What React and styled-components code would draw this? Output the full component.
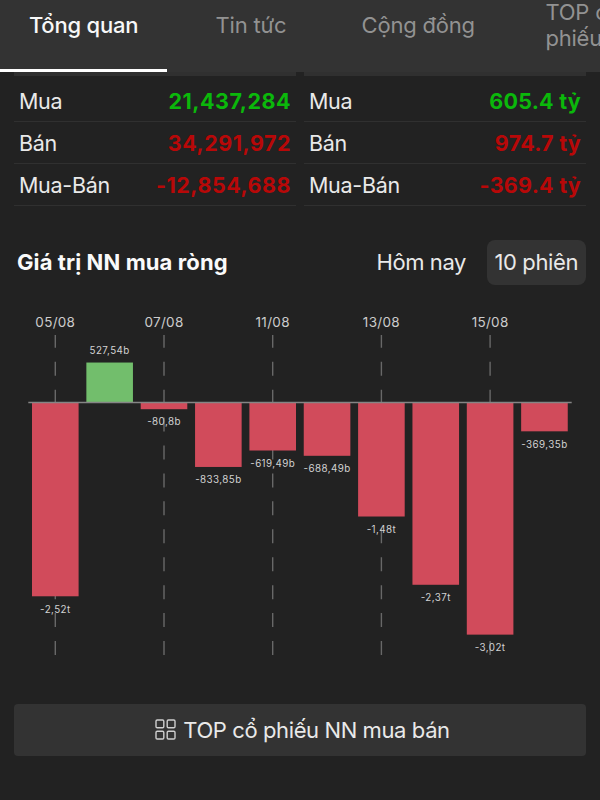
import styled, { createGlobalStyle } from "styled-components";

const sessions = [
    { date: "05/08", value: -2.52, label: "-2,52t" },
    { date: "06/08", value: 0.52754, label: "527,54b" },
    { date: "07/08", value: -0.0808, label: "-80,8b" },
    { date: "08/08", value: -0.83385, label: "-833,85b" },
    { date: "11/08", value: -0.61949, label: "-619,49b" },
    { date: "12/08", value: -0.68849, label: "-688,49b" },
    { date: "13/08", value: -1.48, label: "-1,48t" },
    { date: "14/08", value: -2.37, label: "-2,37t" },
    { date: "15/08", value: -3.02, label: "-3,02t" },
    { date: "18/08", value: -0.36935, label: "-369,35b" },
];

const volume = [
    { name: "Mua", value: "21,437,284", up: true },
    { name: "Bán", value: "34,291,972" },
    { name: "Mua-Bán", value: "-12,854,688" },
];

const money = [
    { name: "Mua", value: "605.4 tỷ", up: true },
    { name: "Bán", value: "974.7 tỷ" },
    { name: "Mua-Bán", value: "-369.4 tỷ" },
];

// chart geometry
const STEP = 54.35;
const FIRST = 55.3;
const BAR = 46.6;
const ZERO = 103;
const SCALE = 76.7;

function Stats({ rows, spacing }) {
    return (
        <StatTable>
            {rows.map((row) => (
                <StatRow key={row.name}>
                    <StatName>{row.name}</StatName>
                    <StatValue $up={row.up} $spacing={spacing}>{row.value}</StatValue>
                </StatRow>
            ))}
        </StatTable>
    );
}

function Chart() {
    return (
        <ChartSvg viewBox="0 0 600 370">
            {sessions.map((s, i) => {
                if (i % 2) return null;
                const x = FIRST + i * STEP;
                return (
                    <g key={s.date}>
                        <DateLabel x={x} y={27}>{s.date}</DateLabel>
                        <Guide x1={x} x2={x} y1={355} y2={35} />
                    </g>
                );
            })}
            {sessions.map((s, i) => {
                const x = FIRST + i * STEP;
                const h = Math.abs(s.value) * SCALE;
                const up = s.value > 0;
                return (
                    <g key={s.date}>
                        <Bar x={x - BAR / 2} y={up ? ZERO - h : ZERO} width={BAR} height={h} $up={up} />
                        <BarLabel x={x} y={up ? ZERO - h - 8.5 : ZERO + h + 16.3}>{s.label}</BarLabel>
                    </g>
                );
            })}
            <Axis x1={28.3} x2={571.7} y1={102.5} y2={102.5} />
        </ChartSvg>
    );
}

function GridIcon() {
    return (
        <svg width="21" height="21" viewBox="0 0 21 21" fill="none" stroke="#cfcfcf" strokeWidth="1.4">
            <rect x="1" y="1" width="7.8" height="7.8" rx="1.2" />
            <rect x="12.2" y="1" width="7.8" height="7.8" rx="1.2" />
            <rect x="1" y="12.2" width="7.8" height="7.8" rx="1.2" />
            <rect x="12.2" y="12.2" width="7.8" height="7.8" rx="1.2" />
        </svg>
    );
}

export default function App() {
    return (
        <Screen>
            <GlobalStyle />
            <Tabs>
                <Tab $active>Tổng quan</Tab>
                <Tab>Tin tức</Tab>
                <Tab>Cộng đồng</Tab>
                <WideTab>TOP cổ<br />phiếu</WideTab>
            </Tabs>
            <StatArea>
                <Stats rows={volume} spacing="0.5px" />
                <Stats rows={money} spacing="0.25px" />
            </StatArea>
            <SectionHead>
                <Title>Giá trị NN mua ròng</Title>
                <Period>Hôm nay</Period>
                <Period $active>10 phiên</Period>
            </SectionHead>
            <Chart />
            <TopButton>
                <GridIcon />
                <span>TOP cổ phiếu NN mua bán</span>
            </TopButton>
        </Screen>
    );
}

const GlobalStyle = createGlobalStyle`
    body {
        margin: 0;
        background-color: #222222;
    }
`;

const Screen = styled.div`
    display: flex;
    flex-direction: column;
    width: 600px;
    height: 800px;
    overflow: hidden;
    box-sizing: border-box;
    background-color: #222222;
    color: #e9e9e9;
    font-family: Inter, "Liberation Sans", sans-serif;
    font-size: 22px;
`;

const Tabs = styled.nav`
    display: flex;
    flex: none;
    height: 72px;
    overflow: hidden;
    background-color: #333333;
`;

const Tab = styled.div`
    flex: none;
    box-sizing: border-box;
    width: 167.3px;
    height: 71.5px;
    padding-top: 12px;
    line-height: 26px;
    letter-spacing: -0.2px;
    text-align: center;
    white-space: nowrap;
    font-weight: ${(p) => (p.$active ? 500 : 400)};
    color: ${(p) => (p.$active ? "#f8f8f8" : "#929292")};
    border-bottom: ${(p) => (p.$active ? "3px solid #ffffff" : "none")};
`;

const WideTab = styled(Tab)`
    height: 52px;
    margin-top: -1px;
    padding: 0 0 0 43.5px;
    text-align: left;
`;

const StatArea = styled.div`
    display: flex;
    flex: none;
    gap: 8px;
    padding: 0 14px;
`;

const StatTable = styled.div`
    flex: 1;
    padding-bottom: 0.4px;
    border-top: 4.6px solid #303030;
`;

const StatRow = styled.div`
    display: flex;
    align-items: center;
    justify-content: space-between;
    box-sizing: border-box;
    height: 42.2px;
    padding: 1px 5px 0;
    border-bottom: 1.5px solid #303030;

    &:first-child {
        height: 46px;
        padding-top: 5px;
    }
`;

const StatName = styled.span`
    font-size: 21.5px;
    letter-spacing: -0.3px;
`;

const StatValue = styled.span`
    font-size: 21.5px;
    font-weight: 700;
    letter-spacing: ${(p) => p.$spacing};
    color: ${(p) => (p.$up ? "#0bb80b" : "#b80808")};
`;

const SectionHead = styled.div`
    display: flex;
    flex: none;
    align-items: center;
    height: 45px;
    margin-top: 33px;
    padding: 0 14px 0 17px;
`;

const Title = styled.h2`
    flex: 1;
    margin: 0;
    font-size: 22px;
    font-weight: 700;
    letter-spacing: 0.1px;
    color: #fafafa;
`;

const Period = styled.button`
    height: 45px;
    margin-left: 13px;
    padding: 0 8px 0 7.5px;
    border: none;
    border-radius: 8px;
    background-color: ${(p) => (p.$active ? "#333333" : "transparent")};
    color: inherit;
    font: inherit;
    letter-spacing: -0.4px;
    white-space: nowrap;
`;

const ChartSvg = styled.svg`
    display: block;
    flex: none;
    width: 600px;
    height: 370px;
    margin-top: 15px;
`;

const DateLabel = styled.text`
    font-size: 13.5px;
    letter-spacing: 0.3px;
    text-anchor: middle;
    fill: #cccccc;
`;

const Guide = styled.line`
    stroke: #686868;
    stroke-width: 1.4;
    stroke-dasharray: 14 13.93;
`;

const Bar = styled.rect`
    fill: ${(p) => (p.$up ? "#72be6c" : "#d14b5b")};
`;

const BarLabel = styled.text`
    font-size: 9.8px;
    letter-spacing: 0.42px;
    text-anchor: middle;
    fill: #d2d2d2;
`;

const Axis = styled.line`
    stroke: #858585;
    stroke-width: 1.4;
`;

const TopButton = styled.button`
    display: flex;
    flex: none;
    align-items: center;
    justify-content: center;
    gap: 7px;
    height: 52px;
    margin: 34px 14px 0;
    padding: 0 0 0 5px;
    border: none;
    border-radius: 4px;
    background-color: #333333;
    color: inherit;
    font: inherit;
    letter-spacing: -0.4px;
`;
